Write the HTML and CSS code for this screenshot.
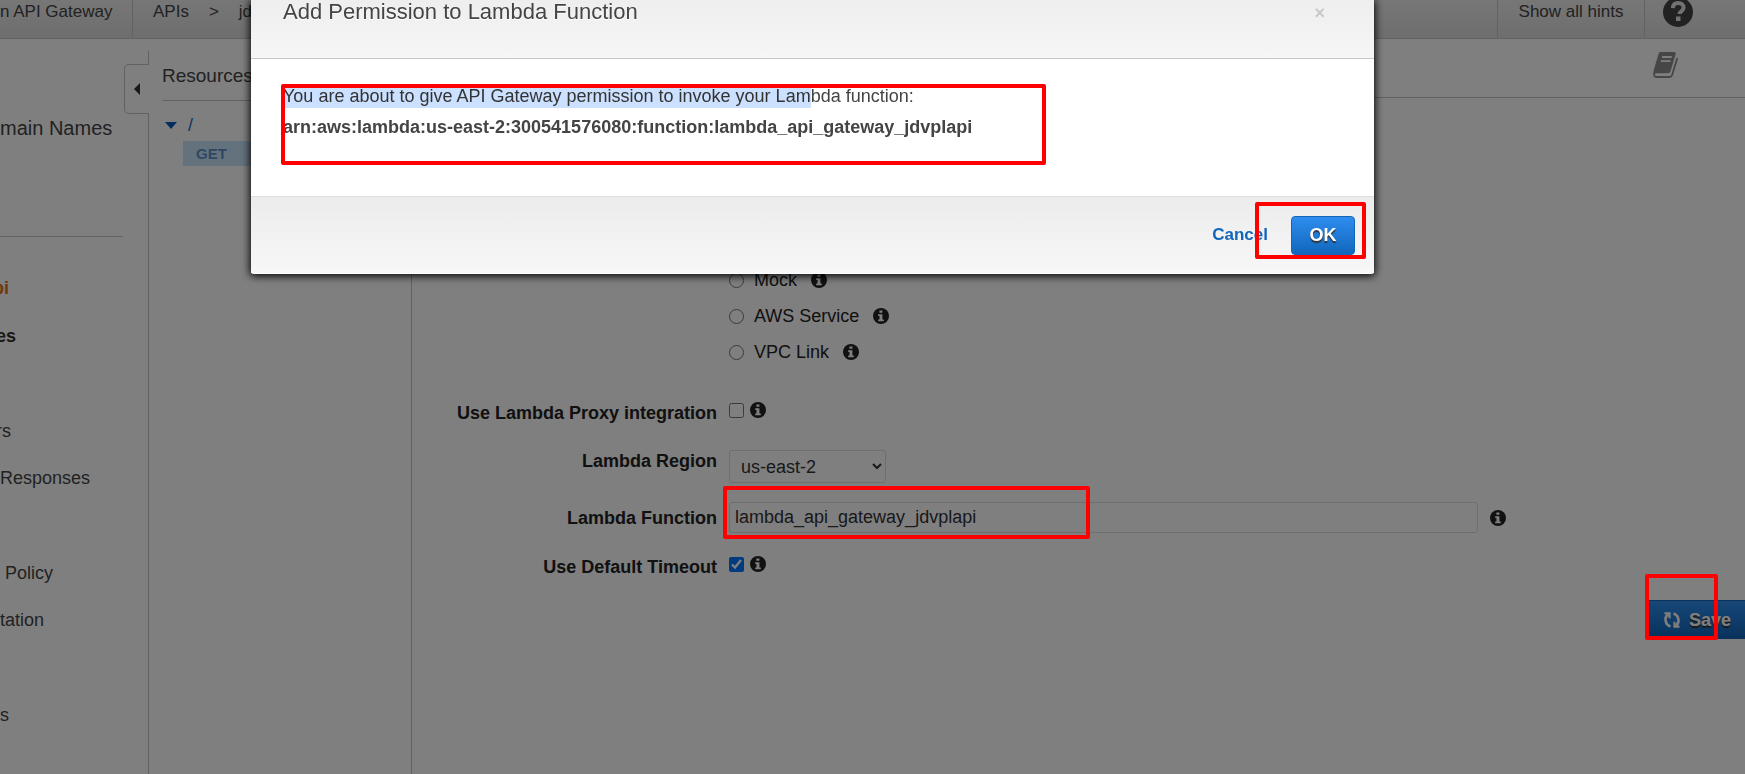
FILE: index.html
```html
<!DOCTYPE html>
<html lang="en">
<head>
<meta charset="utf-8">
<title>Add Permission to Lambda Function</title>
<link rel="stylesheet" href="styles.css">
</head>
<body>
<svg class="defs" width="0" height="0" aria-hidden="true">
  <symbol id="info" viewBox="0 0 16 16">
    <circle cx="8" cy="8" r="8" fill="#222"/>
    <path d="M6.4 2.4h3v2.4h-3zM5.2 6.2h4.2v5.2h1.4v1.8H5.2v-1.8h1.3V8H5.2z" fill="#fff"/>
  </symbol>
</svg>
<div class="page">
  <header class="topbar">
    <a class="brand" href="#">n API Gateway</a>
    <nav class="crumbs"><a href="#">APIs</a><span>&gt;</span><a href="#">jd</a></nav>
    <a class="hints" href="#">Show all hints</a>
    <button class="help" aria-label="Help">
      <svg viewBox="0 0 30 30" width="30" height="30"><circle cx="15" cy="15" r="15" fill="#444"/><path d="M9.8 11.2C10 7.6 12 6 15.2 6c3.200 0 5.400 1.900 5.400 4.600 0 3.900-4 3.600-4 6.400" fill="none" stroke="#e4e4e4" stroke-width="4"/><path d="M13 19.500h4.500v4.500H13z" fill="#e4e4e4"/></svg>
    </button>
  </header>
  <div class="columns">
    <nav class="sidebar">
      <a class="domain" href="#">main Names</a>
      <hr>
      <ul>
        <li class="api"><a href="#">pi</a></li>
        <li class="current"><a href="#">es</a></li>
        <li class="gap cut"><a href="#">rs</a></li>
        <li><a href="#">Responses</a></li>
        <li class="gap"><a href="#">&nbsp;Policy</a></li>
        <li><a href="#">tation</a></li>
        <li class="gap"><a href="#">s</a></li>
      </ul>
      <button class="collapse" aria-label="Collapse"><svg viewBox="0 0 6 12" width="6" height="12"><path d="M6 0v12L0 6z" fill="#333"/></svg></button>
    </nav>
    <section class="resources">
      <h2>Resources</h2>
      <a class="root" href="#"><svg viewBox="0 0 12 7" width="12" height="7"><path d="M0 0h12L6 7z" fill="#0a5cc0"/></svg><span>/</span></a>
      <a class="method" href="#">GET</a>
    </section>
    <main class="content">
      <div class="tools">
        <button class="book" aria-label="Documentation"><svg viewBox="0 0 28 26" width="28" height="26"><path d="M2.500 21q-1.200 4 2 4H17.500q2 0 2.600-2L25.300 6" fill="none" stroke="#8c8c8c" stroke-width="1.800"/><path d="M8.500 0H22q2.200 0 1.600 2.200L18.500 19.200Q17.900 21.200 15.800 21.200H4q-1.800 0-2.400 1Q1 21 1.500 19L6.500 2Q7 0 8.500 0z" fill="#8c8c8c"/><path d="M10 5h9.700M8.800 9.200h9.700" stroke="#fff" stroke-width="1.800"/></svg></button>
      </div>
      <form class="form" onsubmit="return false">
        <div class="choices">
          <label><input type="radio" name="type">Mock<svg class="info"><use href="#info"/></svg></label>
          <label><input type="radio" name="type">AWS Service<svg class="info"><use href="#info"/></svg></label>
          <label><input type="radio" name="type">VPC Link<svg class="info"><use href="#info"/></svg></label>
        </div>
        <label class="name" for="proxy">Use Lambda Proxy integration</label>
        <div class="field"><input id="proxy" type="checkbox"><svg class="info"><use href="#info"/></svg></div>
        <label class="name" for="region">Lambda Region</label>
        <div class="field region"><select id="region"><option>us-east-2</option></select></div>
        <label class="name" for="fn">Lambda Function</label>
        <div class="field wide"><input id="fn" type="text" value="lambda_api_gateway_jdvplapi"><svg class="info"><use href="#info"/></svg></div>
        <label class="name" for="timeout">Use Default Timeout</label>
        <div class="field"><input id="timeout" type="checkbox" checked><svg class="info"><use href="#info"/></svg></div>
      </form>
      <div class="actions">
        <button class="primary save"><svg viewBox="0 0 18 18" width="18" height="18" fill="none" stroke="#fff" stroke-width="2.600"><path d="M7.500 15.500C2.500 14 .500 7 5 3.500M10.500 2.500C15.500 4 17.500 11 13 14.500"/><path d="M1.500 2.300h5v5M16.500 15.700h-5v-5" stroke-width="2.200"/></svg>Save</button>
      </div>
    </main>
  </div>
</div>
<div class="backdrop"></div>
<div class="dialog" role="dialog" aria-labelledby="dialog-title">
  <header><h1 id="dialog-title">Add Permission to Lambda Function</h1><button class="close" aria-label="Close">×</button></header>
  <div class="message">
    <p><span class="selected">You are about to give API Gateway permission to invoke your Lam</span>bda function:</p>
    <p><strong>arn:aws:lambda:us-east-2:300541576080:function:lambda_api_gateway_jdvplapi</strong></p>
  </div>
  <footer><button class="cancel">Cancel</button><button class="primary ok">OK</button></footer>
</div>
<div class="mark mark-message"></div>
<div class="mark mark-ok"></div>
<div class="mark mark-function"></div>
<div class="mark mark-save"></div>
</body>
</html>
```
FILE: styles.css
```css
* { box-sizing: border-box; }
body {
  margin: 0;
  overflow: hidden;
  background: #fff;
  color: #444;
  font: 18px/24px "Liberation Sans", Arial, sans-serif;
}
a { color: inherit; text-decoration: none; }
button { padding: 0; border: 0; background: none; font: inherit; cursor: pointer; }
h1, h2, p, ul { margin: 0; padding: 0; font-weight: normal; }
.defs { position: absolute; }
.page { display: flex; flex-direction: column; min-height: 100vh; overflow: hidden; }

.topbar {
  display: flex;
  height: 39px;
  border-bottom: 1px solid #c4c4c4;
  background: linear-gradient(#eee, #dcdcdc);
  font-size: 17px;
}
.brand { width: 133px; height: 37px; border-right: 1px solid #c4c4c4; }
.crumbs { display: flex; flex: 1; gap: 20px; padding-left: 20px; }
.hints { width: 148px; height: 37px; border: solid #c4c4c4; border-width: 0 1px; text-align: center; }
.help { height: 30px; margin: -3px 52px 0 18px; }
.help svg, .book svg { display: block; }

.columns { display: flex; flex: 1; }
.sidebar {
  position: relative;
  width: 149px;
  margin-top: 12px;
  padding-top: 65px;
  border-right: 1px solid #c4c4c4;
}
.domain { display: block; font-size: 20px; }
.sidebar hr { margin: 96px 25px 39px 0; border: 0; border-top: 1px solid #c4c4c4; }
.sidebar ul { display: grid; gap: 23px; list-style: none; }
.sidebar li { height: 24px; }
.sidebar .gap { margin-top: 48px; }
.cut { margin-left: -4px; }
.api { margin-left: -7px; color: #e47021; font-weight: bold; }
.current { margin: 1px 0 0 -4px; color: #333; font-weight: bold; }
.collapse {
  position: absolute;
  top: 13px;
  right: -1px;
  width: 25px;
  height: 50px;
  border: 1px solid #c4c4c4;
  border-right: 0;
  border-radius: 5px 0 0 5px;
  background: #fff;
}
.resources { width: 263px; border-right: 1px solid #c4c4c4; padding: 25px 0 0 13px; }
.resources h2 { height: 37px; border-bottom: 1px solid #c4c4c4; font-size: 19px; }
.root { display: flex; align-items: center; gap: 11px; margin: 12px 0 4px 3px; color: #146eb4; }
.method { display: block; padding-left: 13px; margin-left: 21px; background: #c8e4fb; color: #5d91c8; font-size: 15px; font-weight: bold; line-height: 25px; }

.content { flex: 1; min-width: 0; color: #222; }
.tools { display: flex; justify-content: flex-end; height: 59px; padding: 13px 65px 0 0; border-bottom: 1px solid #c4c4c4; }
.book { height: 26px; }
.form {
  display: grid;
  grid-template-columns: 305px 1fr;
  grid-template-rows: auto 48px 57px 49px 49px;
  column-gap: 12px;
  align-items: start;
  padding-top: 170px;
}
.choices { grid-column: 2; display: grid; gap: 12px; padding-bottom: 33px; }
.choices label { display: flex; align-items: center; height: 24px; }
.choices input { margin-right: 10px; }
.choices .info { margin-left: 14px; }
.form input[type=radio], .form input[type=checkbox] { width: 15px; height: 15px; margin-top: 0; margin-bottom: 0; margin-left: 0; }
.info { width: 16px; height: 16px; flex: none; }
.name { padding-top: 4px; text-align: right; font-weight: bold; }
.field { display: flex; align-items: center; gap: 6px; min-height: 26px; }
.field input[type=checkbox] { margin-right: 0; }
.field.region { padding-top: 5px; }
.field.wide { gap: 12px; padding-right: 239px; }
.field select, .field input[type=text] { border: 1px solid #ddd; border-radius: 3px; background: #fff; color: #333; font: inherit; }
.field select { width: 157px; height: 33px; padding: 0 7px; }
.field input[type=text] { flex: 1; min-width: 0; height: 31px; padding: 0 5px; }
.actions { display: flex; justify-content: flex-end; }
.primary {
  height: 39px;
  border: 1px solid #1464b8;
  border-radius: 4px;
  background: linear-gradient(#2e8def, #1166bb);
  color: #fff;
  font-weight: bold;
  text-shadow: 0 2px 1px #333;
}
.save { display: flex; align-items: center; gap: 8px; padding: 0 14px 0 15px; border-radius: 0; border-right: 0; }

.backdrop { position: fixed; inset: 0; background: rgba(0, 0, 0, .5); }
.dialog {
  position: fixed;
  top: 0;
  left: 251px;
  right: 371px;
  border-bottom: 1px solid #fff;
  border-radius: 0 0 3px 3px;
  background: #fff;
  box-shadow: 0 1px 9px 1px #000;
}
.dialog header { display: flex; justify-content: space-between; height: 59px; padding: 0 49px 0 32px; border-bottom: 1px solid #c8c8c8; background: linear-gradient(#eee, #f6f6f6); }
.dialog h1 { font-size: 22px; text-shadow: 0 1px 0 #fff; }
.close { height: 26px; color: #c8c8c8; font-weight: bold; }
.message { height: 137px; padding: 22px 32px; line-height: 31px; }
.selected { padding: 2px 0; background: #cce0ff; color: #333; }
.dialog footer { display: flex; justify-content: flex-end; align-items: center; gap: 23px; height: 77px; padding-right: 19px; border-top: 1px solid #e0e0e0; background: linear-gradient(#ececec, #f7f7f7); }
.cancel { color: #1166bb; font-size: 17px; font-weight: bold; }
.ok { width: 64px; }

.mark { position: fixed; border: 4px solid #f00; border-radius: 2px; pointer-events: none; }
.mark-message { left: 281px; top: 84px; width: 765px; height: 81px; }
.mark-ok { left: 1255px; top: 202px; width: 111px; height: 57px; }
.mark-function { left: 723px; top: 486px; width: 367px; height: 53px; }
.mark-save { left: 1645px; top: 574px; width: 73px; height: 66px; }
```
